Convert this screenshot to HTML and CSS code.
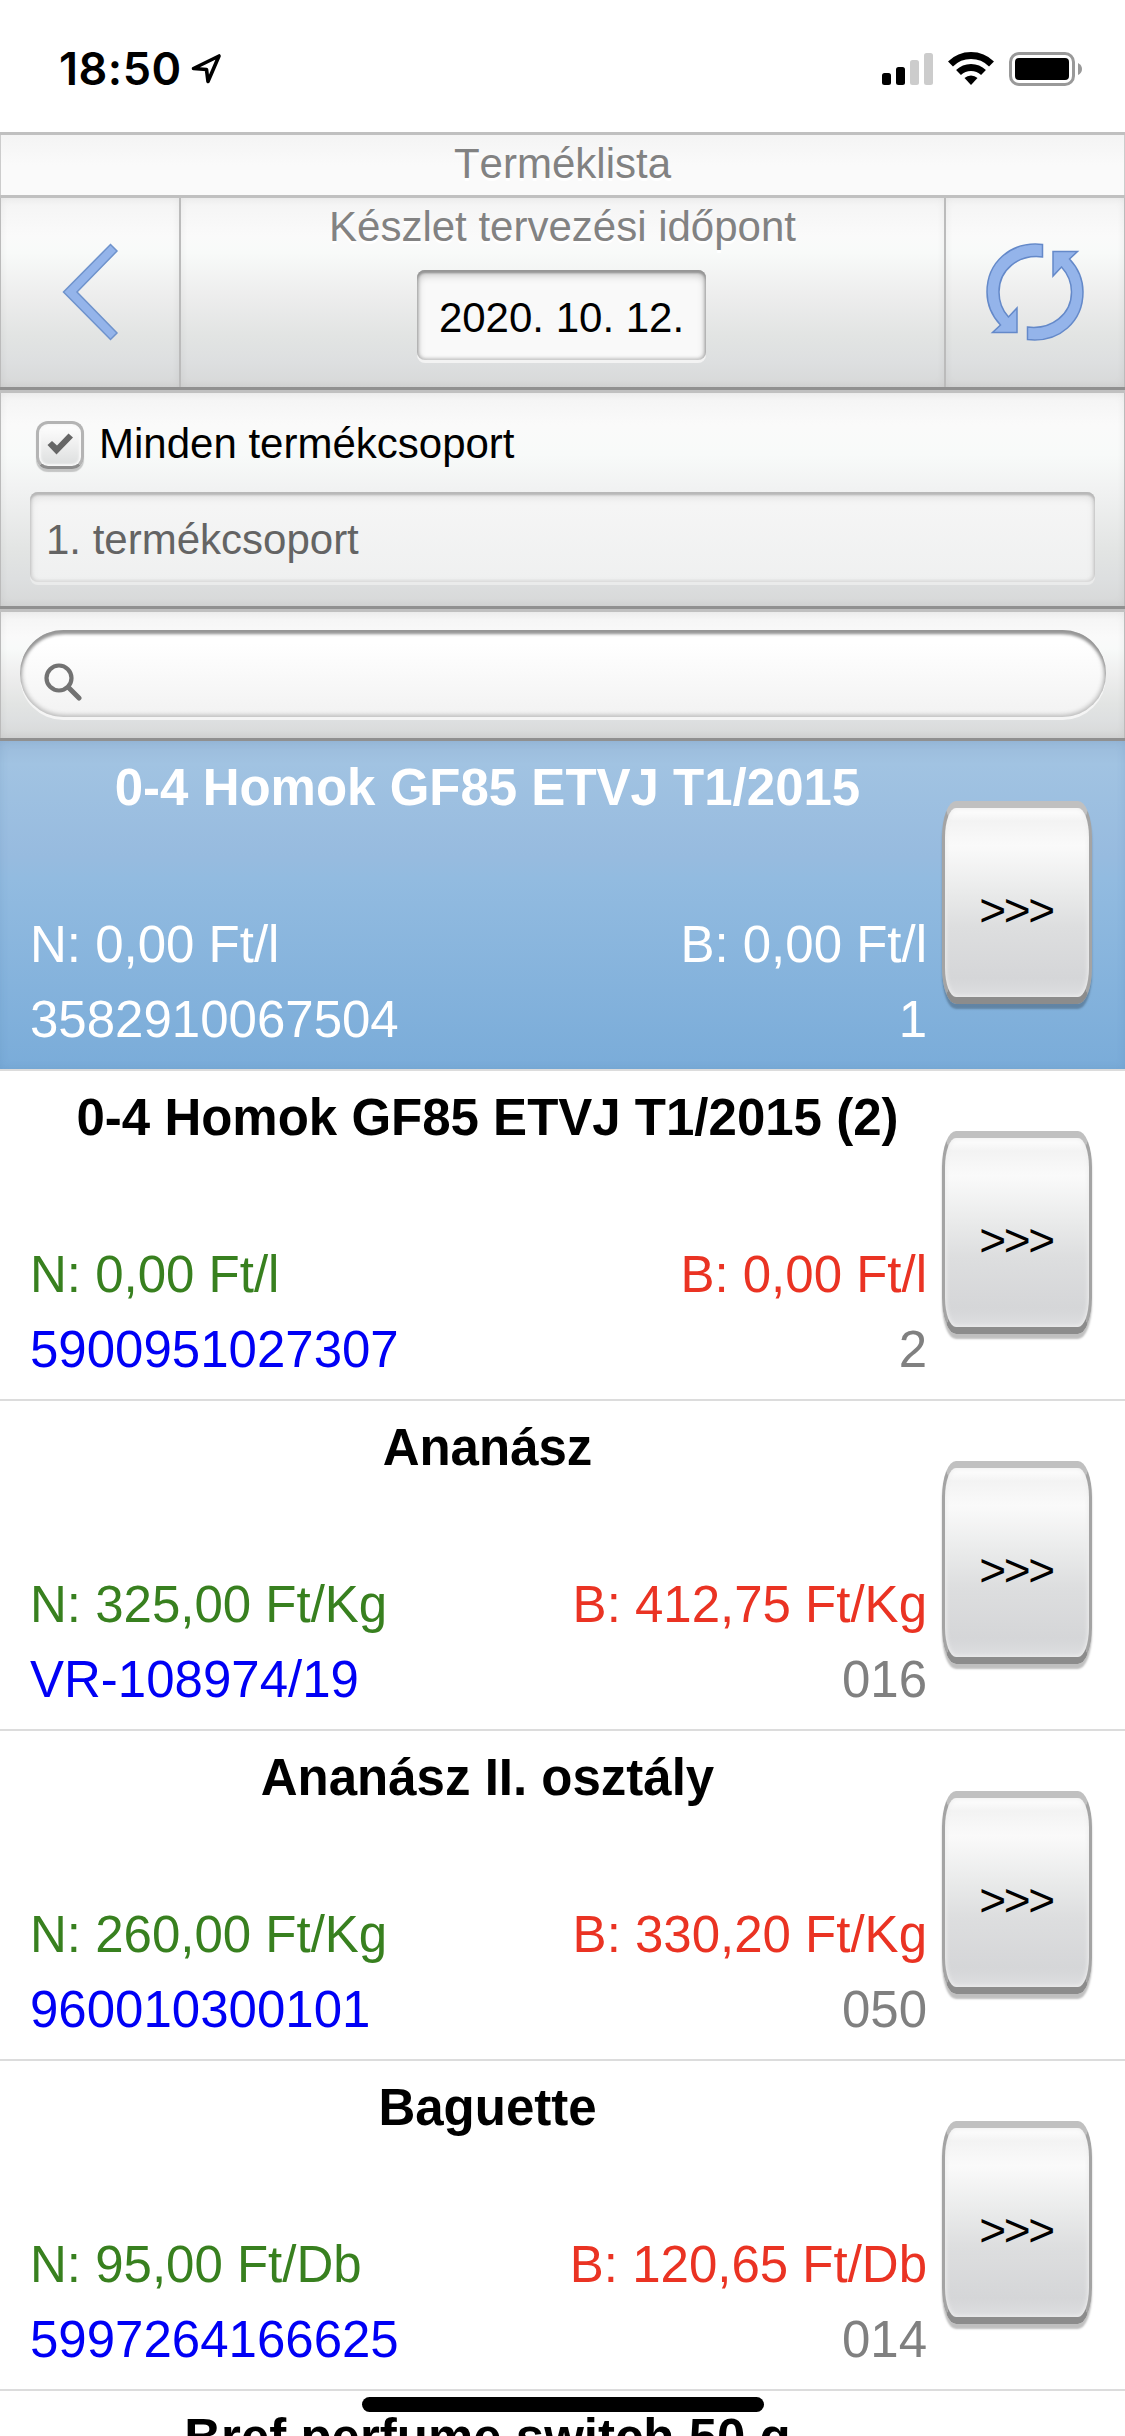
FILE: index.html
```
<!DOCTYPE html>
<html lang="hu">
<head>
  <meta charset="UTF-8" />
  <meta name="viewport" content="width=device-width, initial-scale=1.0"/>
  <title>Terméklista</title>
  <link rel="stylesheet" href="styles.css">
</head>
<body>
  <div class="status-bar">
    <div class="status-left">
      <span class="time">18:50</span>
      <svg class="location" width="31" height="32" viewBox="0 0 31 32">
        <path d="M2.5 15.5 L28 3 L17 28.500 L15.500 16.500 Z" fill="none" stroke="#000" stroke-width="3.600" stroke-linejoin="round"/>
      </svg>
    </div>
    <div class="status-right">
      <svg width="201" height="34" viewBox="0 0 201 34">
        <rect x="0" y="21" width="9" height="12" rx="2.5"/>
        <rect x="14" y="15" width="9" height="18" rx="2.5"/>
        <rect x="28" y="8" width="9" height="25" rx="2.5" fill="#ccc"/>
        <rect x="42" y="1" width="9" height="32" rx="2.5" fill="#ccc"/>
        <g fill="none" stroke="#000" stroke-width="7">
          <path d="M68.5 12 A29 29 0 0 1 109.500 12"/>
          <path d="M76.500 20.500 A18 18 0 0 1 101.500 20.500"/>
        </g>
        <path d="M82.500 26 A9.500 9.500 0 0 1 95.500 26 L89 33 Z"/>
        <rect x="128.500" y="1.500" width="63" height="31" rx="8.500" fill="none" stroke="#999" stroke-width="3"/>
        <rect x="133" y="6" width="54" height="22" rx="4"/>
        <path d="M196 11 Q200 13 200 17 Q200 21 196 23 Z" fill="#999"/>
      </svg>
    </div>
  </div>

  <div class="header">
    <h1 class="title">Terméklista</h1>
    <div class="toolbar">
      <button class="tool back">
        <svg width="57" height="98" viewBox="0 0 57 98">
          <path d="M48.500 1.500 L55 8 L15 49 L55 90 L48.500 96.500 L1.500 49 Z" fill="#94b4ea" stroke="#6f93cc" stroke-width="1.500"/>
        </svg>
      </button>
      <div class="date-panel">
        <label for="planDate">Készlet tervezési időpont</label>
        <div class="date-input" id="planDate">2020. 10. 12.</div>
      </div>
      <button class="tool refresh">
        <svg width="98" height="98" viewBox="0 0 98 98">
          <g fill="#94b4ea" stroke="#6489c9" stroke-width="1.500">
            <path d="M56.500 1.500 C24 -2 1 20 1 49 C1 62 6 73 14.500 82 L6.500 89.500 L31 89.500 L31 65 L22.500 74 C16 67 13 59 13 49 C13 27 32 11 56.500 14 Z"/>
            <path d="M41.500 96.500 C74 100 97 78 97 49 C97 36 92 25 83.500 16 L91.500 8.500 L67 8.500 L67 33 L75.500 24 C82 31 85.500 39 85.500 49 C85.500 71 66 87 41.500 84 Z"/>
          </g>
        </svg>
      </button>
    </div>
  </div>

  <div class="filter">
    <div class="check-row">
      <span class="checkbox">
        <svg width="26" height="22" viewBox="0 0 26 22">
          <path d="M0.500 12 L5 8 L10 12.500 L21.500 0.500 L26 4.500 L9.500 21.500 Z" fill="#666"/>
        </svg>
      </span>
      <span class="check-label">Minden termékcsoport</span>
    </div>
    <div class="select">1. termékcsoport</div>
  </div>

  <div class="search">
    <div class="search-input">
      <svg width="38" height="38" viewBox="0 0 38 38">
        <circle cx="15" cy="15" r="12.500" fill="none" stroke="#727272" stroke-width="4.200"/>
        <path d="M24.500 24.500 L35 35" stroke="#727272" stroke-width="5" stroke-linecap="round"/>
      </svg>
    </div>
  </div>

  <div class="product-list">
    <div class="product selected">
      <div class="info">
        <h2>0-4 Homok GF85 ETVJ T1/2015</h2>
        <div class="line"><span class="net">N: 0,00 Ft/l</span><span class="gross">B: 0,00 Ft/l</span></div>
        <div class="line"><span class="code">3582910067504</span><span class="number">1</span></div>
      </div>
      <button class="more">&gt;&gt;&gt;</button>
    </div>
    <div class="product">
      <div class="info">
        <h2>0-4 Homok GF85 ETVJ T1/2015 (2)</h2>
        <div class="line"><span class="net">N: 0,00 Ft/l</span><span class="gross">B: 0,00 Ft/l</span></div>
        <div class="line"><span class="code">5900951027307</span><span class="number">2</span></div>
      </div>
      <button class="more">&gt;&gt;&gt;</button>
    </div>
    <div class="product">
      <div class="info">
        <h2>Ananász</h2>
        <div class="line"><span class="net">N: 325,00 Ft/Kg</span><span class="gross">B: 412,75 Ft/Kg</span></div>
        <div class="line"><span class="code">VR-108974/19</span><span class="number">016</span></div>
      </div>
      <button class="more">&gt;&gt;&gt;</button>
    </div>
    <div class="product">
      <div class="info">
        <h2>Ananász II. osztály</h2>
        <div class="line"><span class="net">N: 260,00 Ft/Kg</span><span class="gross">B: 330,20 Ft/Kg</span></div>
        <div class="line"><span class="code">960010300101</span><span class="number">050</span></div>
      </div>
      <button class="more">&gt;&gt;&gt;</button>
    </div>
    <div class="product">
      <div class="info">
        <h2>Baguette</h2>
        <div class="line"><span class="net">N: 95,00 Ft/Db</span><span class="gross">B: 120,65 Ft/Db</span></div>
        <div class="line"><span class="code">5997264166625</span><span class="number">014</span></div>
      </div>
      <button class="more">&gt;&gt;&gt;</button>
    </div>
    <div class="product">
      <div class="info">
        <h2>Bref perfume switch 50 g</h2>
      </div>
    </div>
  </div>

  <div class="home-indicator"></div>
</body>
</html>
```
FILE: styles.css
```
* {
  box-sizing: border-box;
  margin: 0;
  padding: 0;
}

body {
  width: 1125px;
  height: 2436px;
  overflow: hidden;
  display: flex;
  flex-direction: column;
  background: #fff;
  font-family: "Liberation Sans", Arial, sans-serif;
  font-size: 42px;
  line-height: 48px;
  color: #000;
}

svg {
  display: block;
}

button {
  font: inherit;
  border: none;
  background: none;
}

/* status bar */
.status-bar {
  height: 132px;
  padding: 0 42px 0 59px;
  display: flex;
  justify-content: space-between;
}

.status-left {
  display: flex;
}

.time {
  font-family: Inter, sans-serif;
  font-weight: 600;
  font-size: 45px;
  letter-spacing: 0.5px;
  line-height: 54px;
  margin-top: 42px;
  width: 132px;
}

.location {
  margin-top: 53px;
}

.status-right {
  padding-top: 52px;
}

/* header */
.header {
  border-bottom: 3px solid #909090;
}

.title {
  height: 63px;
  border-top: 3px solid #c0c0c0;
  background: linear-gradient(#f4f4f4, #fafafa 50%, #fafafa);
  box-shadow: inset 1px 0 #ccc, inset -1px 0 #ccc;
  font-size: 42px;
  font-weight: normal;
  font-kerning: none;
  line-height: 58px;
  text-align: center;
  color: #828282;
  text-shadow: 0 3px 0 #fff;
}

.toolbar {
  display: flex;
  height: 192px;
  border-top: 3px solid #c0c0c0;
}

.tool,
.date-panel,
.search {
  background: linear-gradient(#f4f4f4, #fafafa 20%, #f8faf9 29%, #eee 50%, #e2e4e3 73%, #dddfe0 87%, #d7d8d8);
  box-shadow: inset 1px 0 #bbb, inset -1px 0 #bbb, inset 0 0 10px rgba(0, 0, 0, 0.07);
}

.tool {
  width: 180px;
  padding-bottom: 2px;
  display: flex;
  align-items: center;
  justify-content: center;
}

.date-panel {
  flex: 1;
  display: flex;
  flex-direction: column;
  align-items: center;
  padding-top: 5px;
  color: #828282;
  text-shadow: 0 3px 0 #fff;
}

.date-input,
.select {
  height: 90px;
  border-radius: 8px;
  background: #f9f9f9;
  box-shadow: inset 0 3px 2px #969696, inset 0 5px 8px rgba(0, 0, 0, 0.22), inset 0 0 3px 2px #ccc, 0 3px 0 #f3f3f3;
}

.date-input {
  width: 289px;
  margin: 19px 2px 0 0;
  line-height: 96px;
  text-align: center;
  color: #000;
  text-shadow: none;
}

/* filter */
.filter {
  height: 219px;
  border-top: 3px solid #c0c0c0;
  border-bottom: 3px solid #909090;
  background: linear-gradient(#f4f4f4, #fafafa 15%, #f8faf9 29%, #f1f2f2 45%, #e2e4e3 75%, #dddfe0 87%, #d7d8d8);
  box-shadow: inset 1px 0 #bbb, inset -1px 0 #bbb, inset 0 0 10px rgba(0, 0, 0, 0.07);
  padding: 27px 30px 0;
}

.check-row {
  display: flex;
  align-items: center;
  height: 50px;
  padding-left: 6px;
}

.check-label {
  padding-bottom: 2px;
}

.checkbox {
  width: 48px;
  height: 48px;
  margin-right: 15px;
  border: 3px solid #b4b4b4;
  border-bottom-color: #8c8c8c;
  border-radius: 12px;
  background: linear-gradient(#fff, #f2f2f2 40%, #dcdede);
  box-shadow: inset 0 0 2px 2px #f8f8f8, 0 3px 1px rgba(0, 0, 0, 0.2);
  padding: 9px 0 0 8px;
}

.select {
  margin-top: 22px;
  padding-left: 16px;
  line-height: 96px;
  color: #646464;
  background: linear-gradient(#f6f6f6, #eff0f0);
  box-shadow: inset 0 3px 2px #b8b8b8, inset 0 5px 8px rgba(0, 0, 0, 0.1), inset 0 0 3px 2px #ddd, 0 3px 0 #eaebeb;
}

/* search */
.search {
  height: 132px;
  border-top: 3px solid #c0c0c0;
  border-bottom: 3px solid #909090;
  padding: 18px 19px 0 20px;
}

.search-input {
  height: 87px;
  border-radius: 44px;
  background: linear-gradient(#fff 15%, #f2f2f2);
  box-shadow: inset 0 4px 3px #969696, inset 0 0 4px 2px #bbb, 0 3px 0 #f5f5f5;
  padding: 33px 0 0 24px;
}

/* product list */
.product-list {
  flex: 1;
  min-height: 0;
  overflow: hidden;
}

.product {
  display: flex;
  height: 330px;
  border-bottom: 2px solid #dcdcdc;
  font-size: 51px;
  line-height: 75px;
}

.product.selected {
  background: linear-gradient(#9bbbdb, #a1c3e2 7%, #97bbdf 35%, #92bbe0 42%, #7aacd9);
  box-shadow: inset 0 0 8px rgba(60, 100, 150, 0.15);
}

.info {
  width: 942px;
  padding: 9px 15px 0 30px;
}

h2 {
  font-size: 51px;
  line-height: 75px;
  text-align: center;
  margin: 0 -18px 82px 0;
  white-space: nowrap;
}

.line {
  display: flex;
  justify-content: space-between;
}

.net {
  color: #38801f;
}

.gross {
  color: #ea3323;
}

.code {
  color: #0000f5;
}

.number {
  color: #808080;
}

.selected h2,
.selected span {
  color: #fff;
}

.more {
  width: 150px;
  height: 203px;
  margin-top: 60px;
  border-style: solid;
  border-width: 7px 3px;
  border-color: #c0c0c0 #a4a4a4 #8c8c8c;
  border-radius: 14px / 36px;
  background: linear-gradient(#fff, #f3f3f3 7%, #fafafa 20%, #e9eaea 45%, #dddedf 63%, #d5d6d8 90%, #dddee0);
  box-shadow: inset 0 0 4px 1px #eee, 0 5px 2px rgba(0, 0, 0, 0.25);
  font-size: 46px;
  letter-spacing: -2.400px;
  padding: 16px 2px 0 0;
}

.home-indicator {
  position: absolute;
  left: 362px;
  top: 2397px;
  width: 402px;
  height: 15px;
  border-radius: 8px;
  background: #000;
}
```
